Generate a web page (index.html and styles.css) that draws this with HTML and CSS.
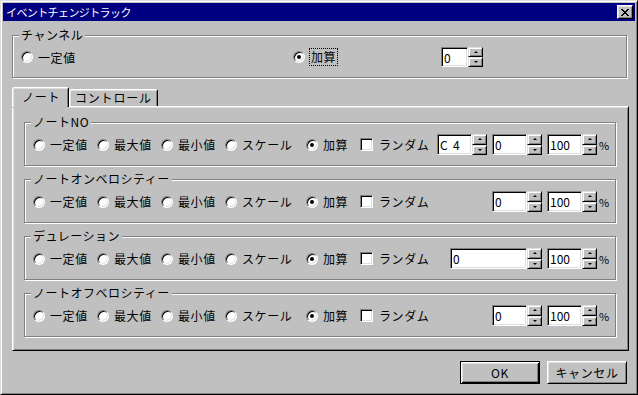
FILE: index.html
```html
<!DOCTYPE html>
<html lang="ja">
<head>
    <meta charset="UTF-8">
    <title>イベントチェンジトラック</title>
    <link rel="stylesheet" href="styles.css">
</head>
<body>
    <div class="window">
        <div class="titlebar">
            <span class="title">イベントチェンジトラック</span>
            <button class="close">
                <svg width="8" height="7" viewBox="0 0 8 7" shape-rendering="crispEdges">
                    <path d="M0 0h2v1H0zM6 0h2v1H6zM1 1h2v1H1zM5 1h2v1H5zM2 2h4v1H2zM3 3h2v1H3zM2 4h4v1H2zM1 5h2v1H1zM5 5h2v1H5zM0 6h2v1H0zM6 6h2v1H6z" fill="#000"/>
                </svg>
            </button>
        </div>

        <div class="content">
            <div class="group channel">
                <span class="legend">チャンネル</span>
                <div class="row row-channel">
                    <label class="opt ch-fixed"><span class="radio"></span>一定値</label>
                    <label class="opt ch-add"><span class="radio on"></span><span class="focus">加算</span></label>
                    <div class="spin short">
                        <input type="text" value="0" readonly>
                        <div class="spin-btns"><span class="up"><i></i></span><span class="down"><i></i></span></div>
                    </div>
                </div>
            </div>

            <div class="tabs">
                <div class="tab active">ノート</div>
                <div class="tab">コントロール</div>
            </div>

            <div class="panel">
                <div class="group note">
                    <span class="legend">ノートNO</span>
                    <div class="row">
                        <label class="opt w64"><span class="radio"></span>一定値</label>
                        <label class="opt w64"><span class="radio"></span>最大値</label>
                        <label class="opt w64"><span class="radio"></span>最小値</label>
                        <label class="opt w81"><span class="radio"></span>スケール</label>
                        <label class="opt w54"><span class="radio on"></span>加算</label>
                        <label class="opt"><span class="check"></span>ランダム</label>
                        <div class="values">
                            <div class="spin">
                                <input type="text" value="C  4" readonly>
                                <div class="spin-btns"><span class="up"><i></i></span><span class="down"><i></i></span></div>
                            </div>
                            <div class="spin">
                                <input type="text" value="0" readonly>
                                <div class="spin-btns"><span class="up"><i></i></span><span class="down"><i></i></span></div>
                            </div>
                            <div class="spin">
                                <input type="text" value="100" readonly>
                                <div class="spin-btns"><span class="up"><i></i></span><span class="down"><i></i></span></div>
                            </div>
                            <span class="pct">%</span>
                        </div>
                    </div>
                </div>

                <div class="group note">
                    <span class="legend">ノートオンベロシティー</span>
                    <div class="row">
                        <label class="opt w64"><span class="radio"></span>一定値</label>
                        <label class="opt w64"><span class="radio"></span>最大値</label>
                        <label class="opt w64"><span class="radio"></span>最小値</label>
                        <label class="opt w81"><span class="radio"></span>スケール</label>
                        <label class="opt w54"><span class="radio on"></span>加算</label>
                        <label class="opt"><span class="check"></span>ランダム</label>
                        <div class="values">
                            <div class="spin">
                                <input type="text" value="0" readonly>
                                <div class="spin-btns"><span class="up"><i></i></span><span class="down"><i></i></span></div>
                            </div>
                            <div class="spin">
                                <input type="text" value="100" readonly>
                                <div class="spin-btns"><span class="up"><i></i></span><span class="down"><i></i></span></div>
                            </div>
                            <span class="pct">%</span>
                        </div>
                    </div>
                </div>

                <div class="group note">
                    <span class="legend">デュレーション</span>
                    <div class="row">
                        <label class="opt w64"><span class="radio"></span>一定値</label>
                        <label class="opt w64"><span class="radio"></span>最大値</label>
                        <label class="opt w64"><span class="radio"></span>最小値</label>
                        <label class="opt w81"><span class="radio"></span>スケール</label>
                        <label class="opt w54"><span class="radio on"></span>加算</label>
                        <label class="opt"><span class="check"></span>ランダム</label>
                        <div class="values">
                            <div class="spin wide">
                                <input type="text" value="0" readonly>
                                <div class="spin-btns"><span class="up"><i></i></span><span class="down"><i></i></span></div>
                            </div>
                            <div class="spin">
                                <input type="text" value="100" readonly>
                                <div class="spin-btns"><span class="up"><i></i></span><span class="down"><i></i></span></div>
                            </div>
                            <span class="pct">%</span>
                        </div>
                    </div>
                </div>

                <div class="group note">
                    <span class="legend">ノートオフベロシティー</span>
                    <div class="row">
                        <label class="opt w64"><span class="radio"></span>一定値</label>
                        <label class="opt w64"><span class="radio"></span>最大値</label>
                        <label class="opt w64"><span class="radio"></span>最小値</label>
                        <label class="opt w81"><span class="radio"></span>スケール</label>
                        <label class="opt w54"><span class="radio on"></span>加算</label>
                        <label class="opt"><span class="check"></span>ランダム</label>
                        <div class="values">
                            <div class="spin">
                                <input type="text" value="0" readonly>
                                <div class="spin-btns"><span class="up"><i></i></span><span class="down"><i></i></span></div>
                            </div>
                            <div class="spin">
                                <input type="text" value="100" readonly>
                                <div class="spin-btns"><span class="up"><i></i></span><span class="down"><i></i></span></div>
                            </div>
                            <span class="pct">%</span>
                        </div>
                    </div>
                </div>
            </div>

            <div class="footer">
                <button class="btn default">OK</button>
                <button class="btn">キャンセル</button>
            </div>
        </div>
    </div>
</body>
</html>
```

FILE: styles.css
```css
* {
    box-sizing: border-box;
}

body {
    margin: 0;
    background: #c0c0c0;
    font: 12px "Noto Sans CJK JP", sans-serif;
    color: #000;
}

.window {
    width: 638px;
    height: 395px;
    border: 1px solid;
    border-color: #dfdfdf #000 #000 #dfdfdf;
    box-shadow: inset 1px 1px #fff, inset -1px -1px #808080;
    padding: 2px;
    display: flex;
    flex-direction: column;
}

.titlebar {
    height: 18px;
    flex: none;
    background: #000080;
    color: #fff;
    display: flex;
    align-items: center;
    justify-content: space-between;
    padding: 0 2px 0 3px;
}

.title {
    font-size: 11px;
    letter-spacing: -0.6px;
}

.close {
    width: 16px;
    height: 14px;
    padding: 0;
    background: #c0c0c0;
    border: 1px solid;
    border-color: #fff #000 #000 #fff;
    box-shadow: inset 1px 1px #dfdfdf, inset -1px -1px #808080;
    display: flex;
    align-items: center;
    justify-content: center;
}

.content {
    flex: 1;
    padding: 14px 6px 0 9px;
    display: flex;
    flex-direction: column;
}

/* etched group box */
.group {
    position: relative;
    border: 1px solid #808080;
    box-shadow: inset 1px 1px #fff, 1px 1px #fff;
}

    .group .legend {
        position: absolute;
        top: -8px;
        left: 6px;
        padding: 0 2px;
        line-height: 14px;
        background: #c0c0c0;
        letter-spacing: 0.5px;
    }

.channel {
    width: 615px;
    height: 43px;
    flex: none;
    padding: 11px 0 0 8px;
}

.row {
    display: flex;
    align-items: center;
    height: 21px;
}

.row-channel {
    height: 20px;
}

.opt {
    display: flex;
    align-items: center;
    gap: 5px;
    flex: none;
    letter-spacing: 0.6px;
}

.ch-fixed { width: 272px; }
.ch-add { width: 148px; }
.w64 { width: 64px; }
.w81 { width: 81px; }
.w54 { width: 54px; }

.focus {
    outline: 1px dotted #000;
    padding: 1px 1px;
    line-height: 14px;
}

.radio {
    position: relative;
    width: 12px;
    height: 12px;
    flex: none;
    border-radius: 50%;
    background: #fff;
    border: 1px solid;
    border-color: #808080 #fff #fff #808080;
    box-shadow: inset 1px 1px #000, inset -1px -1px #dfdfdf;
}

    .radio.on::after {
        content: "";
        position: absolute;
        left: 3px;
        top: 3px;
        width: 4px;
        height: 4px;
        border-radius: 50%;
        background: #000;
    }

.check {
    width: 13px;
    height: 13px;
    flex: none;
    background: #fff;
    border: 1px solid;
    border-color: #808080 #fff #fff #808080;
    box-shadow: inset 1px 1px #000, inset -1px -1px #dfdfdf;
    margin-right: 1px;
}

.values {
    margin-left: auto;
    display: flex;
    align-items: center;
    gap: 5px;
}

.spin {
    display: flex;
    height: 21px;
}

    .spin input {
        width: 35px;
        height: 100%;
        margin: 0;
        padding: 0 2px;
        font: inherit;
        color: #000;
        background: #fff;
        border: 1px solid;
        border-color: #808080 #fff #fff #808080;
        box-shadow: inset 1px 1px #000, inset -1px -1px #dfdfdf;
        outline: none;
        white-space: pre;
    }

    .spin.short {
        height: 20px;
    }

        .spin.short input {
            width: 27px;
        }

    .spin.wide input {
        width: 77px;
    }

.spin-btns {
    width: 15px;
    display: flex;
    flex-direction: column;
}

    .spin-btns span {
        flex: 1;
        display: flex;
        align-items: center;
        justify-content: center;
        background: #c0c0c0;
        border: 1px solid;
        border-color: #dfdfdf #000 #000 #dfdfdf;
        box-shadow: inset 1px 1px #fff, inset -1px -1px #808080;
    }

    .spin-btns i {
        width: 0;
        height: 0;
        border-left: 2px solid transparent;
        border-right: 2px solid transparent;
    }

    .spin-btns .up i {
        border-bottom: 2px solid #000;
    }

    .spin-btns .down i {
        border-top: 2px solid #000;
    }

.pct {
    width: 9px;
    font-size: 11px;
    margin-left: -3px;
}

/* tabs */
.tabs {
    display: flex;
    align-items: flex-end;
    height: 19px;
    margin-top: 9px;
    flex: none;
}

.tab {
    width: 89px;
    height: 17px;
    padding-left: 5px;
    line-height: 15px;
    letter-spacing: 0.8px;
    border: 1px solid;
    border-bottom: none;
    border-color: #fff #000 transparent #fff;
    border-radius: 2px 2px 0 0;
    box-shadow: inset 1px 1px #dfdfdf, inset -1px 0 #808080;
}

    .tab.active {
        position: relative;
        z-index: 1;
        width: 57px;
        height: 20px;
        margin-bottom: -1px;
        padding-left: 9px;
        line-height: 18px;
        background: #c0c0c0;
        box-shadow: inset 1px 1px #dfdfdf, inset -1px 0 #808080, 0 1px #c0c0c0;
    }

.panel {
    width: 617px;
    height: 245px;
    flex: none;
    border: 1px solid;
    border-color: #fff #000 #000 #fff;
    box-shadow: inset 1px 1px #dfdfdf, inset -1px -1px #808080;
    padding: 15px 12px 0 11px;
    display: flex;
    flex-direction: column;
    gap: 13px;
}

.note {
    height: 44px;
    flex: none;
    padding: 11px 7px 0 8px;
}

.footer {
    display: flex;
    justify-content: flex-end;
    gap: 7px;
    margin-top: 10px;
    padding-right: 2px;
}

.btn {
    width: 80px;
    height: 23px;
    padding: 0;
    font: inherit;
    letter-spacing: 0.6px;
    color: #000;
    background: #c0c0c0;
    border: 1px solid;
    border-color: #fff #000 #000 #fff;
    box-shadow: inset 1px 1px #dfdfdf, inset -1px -1px #808080;
}

    .btn.default {
        border-color: #000;
        box-shadow: inset 1px 1px #fff, inset -1px -1px #000, inset 2px 2px #dfdfdf, inset -2px -2px #808080;
    }
```
